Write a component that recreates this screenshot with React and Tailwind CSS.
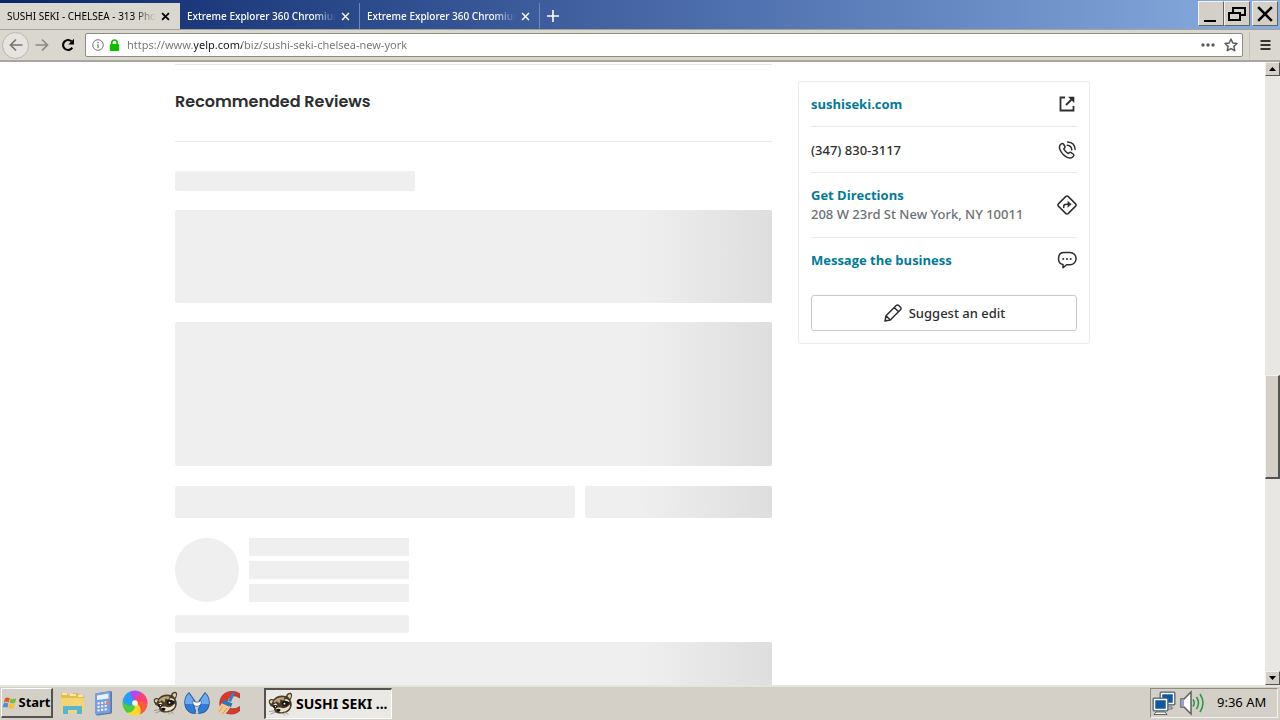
import React from "react";

const TABS = [
  { title: "SUSHI SEKI - CHELSEA - 313 Photos", active: true },
  { title: "Extreme Explorer 360 Chromium", active: false },
  { title: "Extreme Explorer 360 Chromium", active: false },
];

function CrossIcon({ className, width = 2 }) {
  return (
    <svg viewBox="0 0 10 10" className={className} fill="none" stroke="currentColor" strokeWidth={width} aria-hidden="true">
      <path d="M1.2 1.2l7.6 7.6M8.8 1.2L1.2 8.8" />
    </svg>
  );
}

function Tab({ title, active }) {
  return (
    <div
      role="tab"
      aria-selected={active}
      className={
        active
          ? "flex w-[180px] items-center bg-[#dad7cf] pr-[10px] pl-[7px] text-black"
          : "flex w-[180px] items-center border-r border-[#6f86b8] pr-[9px] pl-[7px] font-medium text-white"
      }
    >
      <span className="min-w-0 flex-1 overflow-hidden whitespace-nowrap mask-r-from-85% mask-r-to-100%">{title}</span>
      <button aria-label="Close tab" className="ml-1 flex size-[10px] items-center justify-center">
        <CrossIcon className="size-[9px]" width={active ? 2 : 1.6} />
      </button>
    </div>
  );
}

function WindowButton({ label, className = "", children }) {
  return (
    <button
      aria-label={label}
      className={`flex h-[25px] w-[26px] items-center justify-center border border-t-[#f4f2ec] border-r-[#66645f] border-b-[#66645f] border-l-[#f4f2ec] bg-[#d4d0c8] text-black ${className}`}
    >
      {children}
    </button>
  );
}

function TitleBar() {
  return (
    <header className="flex h-[29px] shrink-0 bg-linear-to-r from-[#0b2769] via-[#4666a6] via-50% to-[#8aaee0] pt-[3px] font-['Noto_Sans',sans-serif] text-[10px]">
      <div role="tablist" className="flex">
        {TABS.map((t, i) => (
          <Tab key={i} {...t} />
        ))}
      </div>
      <button aria-label="New tab" className="flex w-[26px] items-center justify-center text-white">
        <svg viewBox="0 0 12 12" className="size-3" stroke="currentColor" strokeWidth="1.6" aria-hidden="true">
          <path d="M6 0v12M0 6h12" />
        </svg>
      </button>
      <div className="-mt-[2px] ml-auto flex pr-[2px]">
        <WindowButton label="Minimize">
          <svg viewBox="0 0 20 20" className="size-5" aria-hidden="true"><path d="M3 16h12v2H3z" /></svg>
        </WindowButton>
        <WindowButton label="Restore">
          <svg viewBox="0 0 20 20" className="size-5" fill="none" stroke="#000" strokeWidth="2" aria-hidden="true">
            <path d="M6 8V4h12v7h-5" />
            <path d="M2 9h11v7H2z" />
          </svg>
        </WindowButton>
        <WindowButton label="Close" className="ml-[2px]">
          <CrossIcon className="size-[18px]" width={1.4} />
        </WindowButton>
      </div>
    </header>
  );
}

function Toolbar() {
  return (
    <nav className="flex h-[33px] shrink-0 items-center border-t border-b-2 border-t-[#a5a29b] border-b-[#aaa69f] bg-[#dad7cf]">
      <button aria-label="Back" className="ml-[2px] flex size-[27px] items-center justify-center rounded-full border border-[#b9b6af] bg-[#e6e4df] text-[#777570]">
        <svg viewBox="0 0 14 14" className="size-[14px]" fill="none" stroke="currentColor" strokeWidth="1.7" aria-hidden="true">
          <path d="M13.5 7H1.5M7 1.5L1.5 7 7 12.5" />
        </svg>
      </button>
      <button aria-label="Forward" className="ml-[6px] flex size-[14px] items-center justify-center text-[#8c8a84]">
        <svg viewBox="0 0 14 14" className="size-[14px]" fill="none" stroke="currentColor" strokeWidth="1.7" aria-hidden="true">
          <path d="M.5 7h12M7 1.5L12.500 7 7 12.500" />
        </svg>
      </button>
      <button aria-label="Reload" className="ml-3 flex size-[14px] items-center justify-center">
        <svg viewBox="0 0 14 14" className="size-[14px]" aria-hidden="true">
          <path d="M11.300 9.600A5 5 0 1 1 10.500 3.300" fill="none" stroke="#000" strokeWidth="2.100" />
          <path d="M13 .8v5.700H7.300z" />
        </svg>
      </button>
      <div className="ml-[10px] flex h-6 min-w-0 flex-1 items-center rounded-[2px] border border-[#8f8c86] bg-white">
        <svg viewBox="0 0 12 12" className="ml-[6px] size-3 shrink-0" fill="none" stroke="#77757a" aria-hidden="true">
          <circle cx="6" cy="6" r="5.300" />
          <path d="M6 5.200v3.800M6 2.900v1.300" strokeWidth="1.300" />
        </svg>
        <svg viewBox="0 0 11 12" className="ml-[5px] h-3 w-[11px] shrink-0" aria-hidden="true">
          <path d="M2.800 6V3.700a2.700 2.700 0 0 1 5.400 0V6" fill="none" stroke="#12bc00" strokeWidth="1.700" />
          <rect x=".8" y="5" width="9.400" height="7" rx="1" fill="#12bc00" />
        </svg>
        <input
          type="text"
          aria-label="Address"
          defaultValue="https://www.yelp.com/biz/sushi-seki-chelsea-new-york"
          className="ml-[7px] min-w-0 flex-1 bg-[linear-gradient(90deg,#727272_67px,#151515_67px,#151515_115px,#727272_115px)] bg-clip-text font-['Noto_Sans',sans-serif] text-[11px] text-transparent outline-none"
        />
        <button aria-label="Page actions" className="flex h-4 w-[14px] items-center">
          <svg viewBox="0 0 14 4" className="h-1 w-[14px]" fill="#5d5b5b" aria-hidden="true">
            <circle cx="2" cy="2" r="1.700" /><circle cx="7" cy="2" r="1.700" /><circle cx="12" cy="2" r="1.700" />
          </svg>
        </button>
        <button aria-label="Bookmark" className="mr-1 ml-[9px] flex size-[14px] items-center">
          <svg viewBox="0 0 14 14" className="size-[14px]" fill="none" stroke="#5d5b5b" strokeWidth="1.500" strokeLinejoin="round" aria-hidden="true">
            <path d="M7 1.100l1.800 3.900 4.200.5-3.100 2.900.8 4.300L7 10.600l-3.700 2.100.8-4.300L1 5.500 5.200 5z" />
          </svg>
        </button>
      </div>
      <span className="ml-[6px] h-[27px] w-px bg-[#c5c2bb]" />
      <button aria-label="Menu" className="mr-[9px] ml-[10px] flex h-4 w-[11px] items-center">
        <svg viewBox="0 0 11 10" className="h-[10px] w-[11px]" stroke="#000" strokeWidth="1.700" aria-hidden="true">
          <path d="M.5 1h10M.5 5h10M.5 9h10" />
        </svg>
      </button>
    </nav>
  );
}

const SHIMMER = "bg-linear-to-r from-[#efefef] to-[#dedede]";

function Reviews() {
  return (
    <section className="min-w-0 flex-1 pt-[2px]" aria-label="Reviews">
      <div className="border-t border-[#e8e8e8] pt-[25px] pb-[27px]">
        <h2 className="font-['Poppins','Inter',sans-serif] text-[16px] leading-6 font-semibold text-[#2d2e2f]">Recommended Reviews</h2>
      </div>
      <div className="h-px bg-[#e8e8e8]" />
      <div className="mt-[29px] flex flex-col">
        <div className="h-5 w-60 rounded-[2px] bg-[#efefef]" />
        <div className={`mt-[19px] h-[93px] rounded-[2px] from-[78%] ${SHIMMER}`} />
        <div className={`mt-[19px] h-36 rounded-[2px] from-[78%] ${SHIMMER}`} />
        <div className="mt-5 flex h-8 gap-[10px]">
          <div className="w-[400px] rounded-[2px] bg-[#efefef]" />
          <div className={`flex-1 rounded-[2px] from-[30%] ${SHIMMER}`} />
        </div>
        <div className="mt-5 flex gap-[10px]">
          <div className="size-16 rounded-full bg-[#efefef]" />
          <div className="flex w-40 flex-col gap-[5px]">
            <div className="h-[18px] bg-[#efefef]" />
            <div className="h-[18px] bg-[#efefef]" />
            <div className="h-[18px] bg-[#efefef]" />
          </div>
        </div>
        <div className="mt-[13px] h-[18px] w-[234px] rounded-[2px] bg-[#efefef]" />
        <div className={`mt-[9px] h-24 rounded-[2px] from-[78%] ${SHIMMER}`} />
      </div>
    </section>
  );
}

function Glyph({ children }) {
  return (
    <svg viewBox="0 0 20 20" className="size-5 shrink-0" fill="none" stroke="#2d2e2f" strokeWidth="1.500" strokeLinecap="round" strokeLinejoin="round" aria-hidden="true">
      {children}
    </svg>
  );
}

function BusinessCard() {
  return (
    <aside className="mt-[19px] w-[292px] shrink-0 self-start rounded-[3px] border border-[#ebebeb] px-3 pb-3 font-['Noto_Sans',sans-serif] text-[13px] leading-5 font-medium text-[#2d2e2f]">
      <div className="flex h-[45px] items-center justify-between border-b border-[#ebebeb]">
        <a href="#site" className="font-['Open_Sans',sans-serif] font-bold text-[#027a97]">sushiseki.com</a>
        <Glyph>
          <path d="M8 3.500H3.500v13h13V12" strokeWidth="1.800" strokeLinecap="butt" strokeLinejoin="miter" />
          <path d="M9 11l6-6" strokeWidth="1.800" strokeLinecap="butt" />
          <path d="M11 2.700h6.300V9z" fill="#2d2e2f" stroke="none" />
        </Glyph>
      </div>
      <div className="flex h-[46px] items-center justify-between border-b border-[#ebebeb]">
        <p>(347) 830-3117</p>
        <Glyph>
          <path d="M4.300 3.800c-2 1.500-2.400 3.500-1.300 6 1.400 3.200 3.800 5.800 7.200 7.500 2.500 1.200 4.800.8 6.300-1.200.6-.8.4-1.600-.3-2.100l-2-1.400c-.7-.5-1.500-.4-2.100.2l-.7.8c-2.100-1-3.700-2.700-4.700-4.800l.8-.7c.6-.5.7-1.400.2-2.100L6.400 4c-.5-.7-1.400-.8-2.100-.2z" />
          <path d="M10.200 5.200c2.800.2 4.400 1.900 4.600 4.700M10.600 1.900c4.500.2 7.300 3.100 7.500 7.600" />
        </Glyph>
      </div>
      <div className="flex h-[65px] items-center justify-between border-b border-[#ebebeb]">
        <div className="leading-[19px]">
          <a href="#directions" className="font-['Open_Sans',sans-serif] font-bold text-[#027a97]">Get Directions</a>
          <p className="text-[#6e7072]">208 W 23rd St New York, NY 10011</p>
        </div>
        <Glyph>
          <path d="M8.900 1.400a1.500 1.500 0 0 1 2.200 0l7.500 7.500a1.500 1.500 0 0 1 0 2.200l-7.500 7.500a1.500 1.500 0 0 1-2.200 0L1.400 11.100a1.500 1.500 0 0 1 0-2.200z" />
          <path d="M6.700 12.500v-.7c0-1.600.9-2.500 2.500-2.500h2.500" />
          <path d="M11 6.500l3.300 2.800L11 12.100z" fill="#2d2e2f" strokeWidth=".5" />
        </Glyph>
      </div>
      <div className="flex h-11 items-center justify-between">
        <a href="#message" className="font-['Open_Sans',sans-serif] font-bold text-[#027a97]">Message the business</a>
        <Glyph>
          <path d="M7 2.500h6a5.500 5.500 0 0 1 0 12.200H9.500L6 17.800v-3.200C3.300 14.200 1.500 12 1.500 8.800 1.500 5 3.700 2.500 7 2.500z" />
          <path d="M6.300 8.900h.01M10 8.900h.01M13.700 8.900h.01" strokeWidth="2" />
        </Glyph>
      </div>
      <button className="mt-[13px] flex h-9 w-full items-center justify-center gap-[6px] rounded-[3px] border border-[#c8c9ca] bg-white">
        <Glyph>
          <path d="M2 18l1-5.300L13.200 2.500a1.800 1.800 0 0 1 2.600 0l1.700 1.700a1.800 1.800 0 0 1 0 2.600L7.300 17zM3 12.700L7.300 17M11.200 4.500l4.300 4.300" />
        </Glyph>
        Suggest an edit
      </button>
    </aside>
  );
}

function ScrollArrow({ up }) {
  return (
    <button
      aria-label={up ? "Scroll up" : "Scroll down"}
      className="flex h-[14px] items-center justify-center border border-t-[#f4f2ec] border-r-[#55534f] border-b-[#55534f] border-l-[#f4f2ec] bg-[#d4d0c8]"
    >
      <svg viewBox="0 0 7 4" className="h-1 w-[7px]" aria-hidden="true">
        <path d={up ? "M3.500 0L7 4H0z" : "M0 0h7L3.500 4z"} />
      </svg>
    </button>
  );
}

function ScrollBar() {
  return (
    <div className="flex w-[15px] shrink-0 flex-col bg-[#e9e7e3]">
      <ScrollArrow up />
      <div className="flex min-h-0 flex-1 flex-col">
        <div className="grow-300" />
        <div className="h-[104px] border-t border-r-2 border-b-2 border-l border-t-[#f4f2ec] border-r-[#55534f] border-b-[#55534f] border-l-[#f4f2ec] bg-[#d4d0c8]" />
        <div className="grow-192" />
      </div>
      <ScrollArrow />
    </div>
  );
}

function Raccoon() {
  return (
    <svg viewBox="0 0 26 24" className="h-6 w-[26px] shrink-0" aria-hidden="true">
      <path d="M1 11C0 8 2 6 5.500 7.500 8 4 13 2.500 18 4c1-3 5.500-4.500 6-1.500.3 2-.6 4-1.500 5.500 2.500 4 1.500 10-4 12.500-3 1.300-7 1.300-9.500.5-3-1-3.500-3.500-2.500-5.500L2.500 14z" fill="#493a29" />
      <path d="M2 10.500c-.5-2 1-2.700 3-1.700l-1.500 3zM19.500 4c1-2 3.500-2.500 3.500-.5 0 1.300-.6 2.500-1.300 3.300z" fill="#e3d3a9" />
      <path d="M5.500 9.500C8 6 12.500 4.500 16.500 5.500l-1.200 3.200-2.800-1.500-.8 4.300-3-2.300-2 1.800z" fill="#bba67c" />
      <path d="M16.500 7.500c2.500-1 4.500.5 5 2.500l-4.500-.5zM5 13l3-1.800 1.500 2z" fill="#f3ead0" />
      <path d="M12.500 15.500c3 1.500 6.500.5 9.500-3 .5 3.500-2.500 6.500-6 7.300-3 .7-6 .2-7.500-.8-1-.8-.5-2.500.5-3.500z" fill="#eee3c6" />
      <path d="M13.500 10c2-1.800 5.500-1.500 8 .8-1 3-4.200 4.200-7 3zM4.500 13.800c1.500-.6 4-.6 5.200.4-.5 1.600-2.500 2.600-4.500 1.600z" fill="#1c1611" />
      <circle cx="16.500" cy="11.700" r=".9" fill="#fff" /><circle cx="7.500" cy="14.600" r=".7" fill="#fff" />
      <path d="M8 17.500c1.200-1 3.500-1 4.500 0 0 1.500-1.200 2.500-2.300 2.500S8 19 8 17.500z" fill="#120e0b" />
      <path d="M1 19.500l6-.8M2.500 22l5-2M15.500 19.500l5 3M14 20.500l3 3" stroke="#8f8a80" strokeWidth=".8" />
    </svg>
  );
}

function WindowsLogo() {
  return (
    <svg viewBox="0 0 15 14" className="h-[14px] w-[15px]" aria-hidden="true">
      <path d="M3 2.200C5 1 6.200 1.300 7.800 2.200L6.700 6.500C5.200 5.700 3.800 5.500 1.900 6.500z" fill="#e8562a" />
      <path d="M8.600 2.500c2 .9 3.700.8 5.700-.2l-1.200 4.400c-1.800 1-3.600 1-5.500.1z" fill="#7fba3c" />
      <path d="M1.600 7.400c1.800-1 3.200-.8 4.800.1l-1.100 4.300C3.800 11 2.400 10.800.5 11.800z" fill="#4a90d8" />
      <path d="M7.300 7.800c1.900.9 3.500.8 5.500-.1l-1.100 4.400c-2 1-3.600.9-5.500 0z" fill="#f6c12c" />
    </svg>
  );
}

function FolderIcon() {
  return (
    <svg viewBox="0 0 24 24" className="size-6" aria-hidden="true">
      <path d="M0 2h6l2 2h4V2h5l2 2h4v18H0z" fill="#e6bd4c" />
      <path d="M1 3h5M9 4h6M17 5h5" stroke="#fff4c9" strokeWidth="1.500" />
      <path d="M0 7h23v15H0z" fill="#f3d673" />
      <path d="M2 15h19v8h-5v-4H7v4H2z" fill="#57b4d4" />
    </svg>
  );
}

function CalculatorIcon() {
  return (
    <svg viewBox="0 0 20 26" className="h-[26px] w-5" aria-hidden="true">
      <path d="M2 3.500L16 1q2-.3 2 1.500V22q0 1.500-1.500 1.800L4 25.500q-2 .3-2-1.500z" fill="#5676b4" />
      <path d="M1 3.500L15 1.200q1.500-.2 1.500 1.200V21q0 1.500-1.500 1.700L2.500 24.500Q1 24.700 1 23z" fill="#7b9edb" />
      <path d="M3 5.500l11.500-2v5L3 10z" fill="#e8f2fd" />
      <path d="M3.500 13.500l10.500-1.400M3.500 17l10.500-1.400M3.500 20.500L14 19" stroke="#eef4ff" strokeWidth="2" strokeDasharray="2.200 1.400" />
      <circle cx="13.500" cy="13" r="1.700" fill="#e68452" />
    </svg>
  );
}

function PinwheelIcon() {
  const colors = ["#a84df0", "#fb3f7a", "#fb5a36", "#ffd52e", "#4ccb3f", "#279df3"];
  return (
    <svg viewBox="-13 -13 26 26" className="size-[26px]" aria-hidden="true">
      {colors.map((c, i) => (
        <path key={c} d="M0 0C-6-2-7-8-4.500-11.700A12.500 12.500 0 0 1 7.500-10C4-8 3-4 0 0z" fill={c} transform={`rotate(${i * 60})`} />
      ))}
      <circle r="2.800" fill="#fff" />
    </svg>
  );
}

function MalwareIcon() {
  return (
    <svg viewBox="0 0 26 24" className="h-6 w-[26px]" aria-hidden="true">
      <g stroke="#1f4f96" strokeWidth=".9" strokeLinejoin="round">
        <path d="M5 1.500L11 10l-1 5 2.200 7.300c-3 .4-6.200-.3-8.200-2.300C-.5 15.500-.5 6.500 5 1.500z" fill="#2f7bd6" />
        <path d="M21 1.500L15 10l1 5-4 7.300c4 .4 8-.3 10-2.300 4.500-4.500 4.500-13.500-1-18.500z" fill="#2f7bd6" />
      </g>
      <path d="M4.900 2.400l5 7.300-.5 3.300L1.200 13C.8 9 2 5 4.900 2.400zM21.100 2.400l-5 7.300.5 3.300 8.200 0c.4-4-.8-8-3.700-10.600z" fill="#6fabec" />
      <path d="M9 9.500c2 2.200 6 2.200 8 0 1 3-1 5.800-4 5.800s-5-2.800-4-5.800z" fill="#fff" stroke="#1f4f96" strokeWidth=".7" />
      <path d="M13 16l1.500 6.800h-3z" fill="#d4d0c8" />
    </svg>
  );
}

function CleanerIcon() {
  return (
    <svg viewBox="0 0 26 26" className="size-[26px]" aria-hidden="true">
      <path d="M24.500 8V3.500C19 .3 12 .8 8 5S3.500 17 8 21s12 4 16.500 0v-4.500c-3.500 2.800-8 3-10.500.7s-2.600-7 0-9.500S21 5.200 24.500 8z" fill="#d9382d" stroke="#a2221b" strokeWidth=".7" />
      <path d="M17.500 2.500c1-.6 2.300 0 2 1.200L16 12l-3-1.300z" fill="#3381bd" />
      <path d="M8.500 9.500l9 4-1.600 3.500-9-4z" fill="#287ab7" />
      <path d="M6.500 13.300l9 4c-2 4-5 7-8 7.500L1 20.500c2.500-1.500 4-4 5.500-7.200z" fill="#f0c898" />
      <path d="M8 16l-4 6M12 18l-4.500 6" stroke="#cf9f63" />
    </svg>
  );
}

const LAUNCHERS = [
  ["File Explorer", <FolderIcon />],
  ["Calculator", <CalculatorIcon />],
  ["Color Wheel", <PinwheelIcon />],
  ["Raccoon Browser", <Raccoon />],
  ["Malware Scanner", <MalwareIcon />],
  ["Cleaner", <CleanerIcon />],
];

function TaskBar() {
  return (
    <footer className="flex h-[35px] shrink-0 items-center border-t-2 border-[#e6e4df] bg-[#d4d0c8] pb-px font-['Noto_Sans',sans-serif] text-black">
      <button className="ml-px flex h-[30px] w-[52px] items-center justify-center gap-px border border-t-white border-r-2 border-r-[#55534f] border-b-2 border-b-[#55534f] border-l-white text-[13px] font-bold">
        <WindowsLogo />
        Start
      </button>
      <div className="ml-1 flex">
        {LAUNCHERS.map(([label, icon]) => (
          <button key={label} aria-label={label} className="flex h-[30px] w-[31px] items-center justify-center">
            {icon}
          </button>
        ))}
      </div>
      <button className="ml-[21px] flex h-[31px] w-32 items-center gap-[2px] border border-t-2 border-l-2 border-t-[#55534f] border-r-white border-b-white border-l-[#55534f] bg-[#ebe9e5] pl-[2px] text-[14px] font-bold whitespace-nowrap">
        <Raccoon />
        SUSHI SEKI ...
      </button>
      <div className="mr-[2px] ml-auto flex h-[30px] w-32 items-center border border-t-[#8f8c86] border-r-[#f4f2ec] border-b-[#f4f2ec] border-l-[#8f8c86] pl-px">
        <svg viewBox="0 0 25 26" className="h-[26px] w-[25px] shrink-0" strokeLinejoin="round" aria-hidden="true">
          <rect x="8" y="2" width="15" height="13" rx="1" fill="#10599f" stroke="#5e5e5e" />
          <rect x="9.500" y="3.500" width="12" height="10" fill="none" stroke="#fff" strokeWidth="1.500" />
          <path d="M12 17h8v2h-8z" fill="#fff" stroke="#5e5e5e" />
          <rect x="1" y="8" width="15" height="13" rx="1" fill="#10599f" stroke="#5e5e5e" />
          <rect x="2.500" y="9.500" width="12" height="10" fill="none" stroke="#fff" strokeWidth="1.500" />
          <path d="M4 22h9l2 2.500H2z" fill="#fff" stroke="#5e5e5e" />
        </svg>
        <svg viewBox="0 0 28 26" className="ml-[2px] h-[26px] w-7 shrink-0" fill="none" aria-hidden="true">
          <path d="M2 9h3l7-7v22l-7-7H2z" fill="#fff" stroke="#5e5e5e" strokeWidth="1.500" />
          <path d="M2 9.500h3v7H2z" fill="#9ca1c8" />
          <path d="M14 9.500q2.500 3.500 0 7M17.500 7q4 6 0 12M21 4q6 9 0 18" stroke="#299448" strokeWidth="1.500" />
        </svg>
        <time className="ml-[10px] text-[13px] whitespace-nowrap">9:36 AM</time>
      </div>
    </footer>
  );
}

export default function App() {
  return (
    <div className="flex h-screen flex-col overflow-hidden bg-white">
      <TitleBar />
      <Toolbar />
      <div className="flex min-h-0 flex-1">
        <main className="min-w-0 flex-1 overflow-hidden">
          <div className="mx-auto flex max-w-[915px] gap-[26px]">
            <Reviews />
            <BusinessCard />
          </div>
        </main>
        <ScrollBar />
      </div>
      <TaskBar />
    </div>
  );
}
